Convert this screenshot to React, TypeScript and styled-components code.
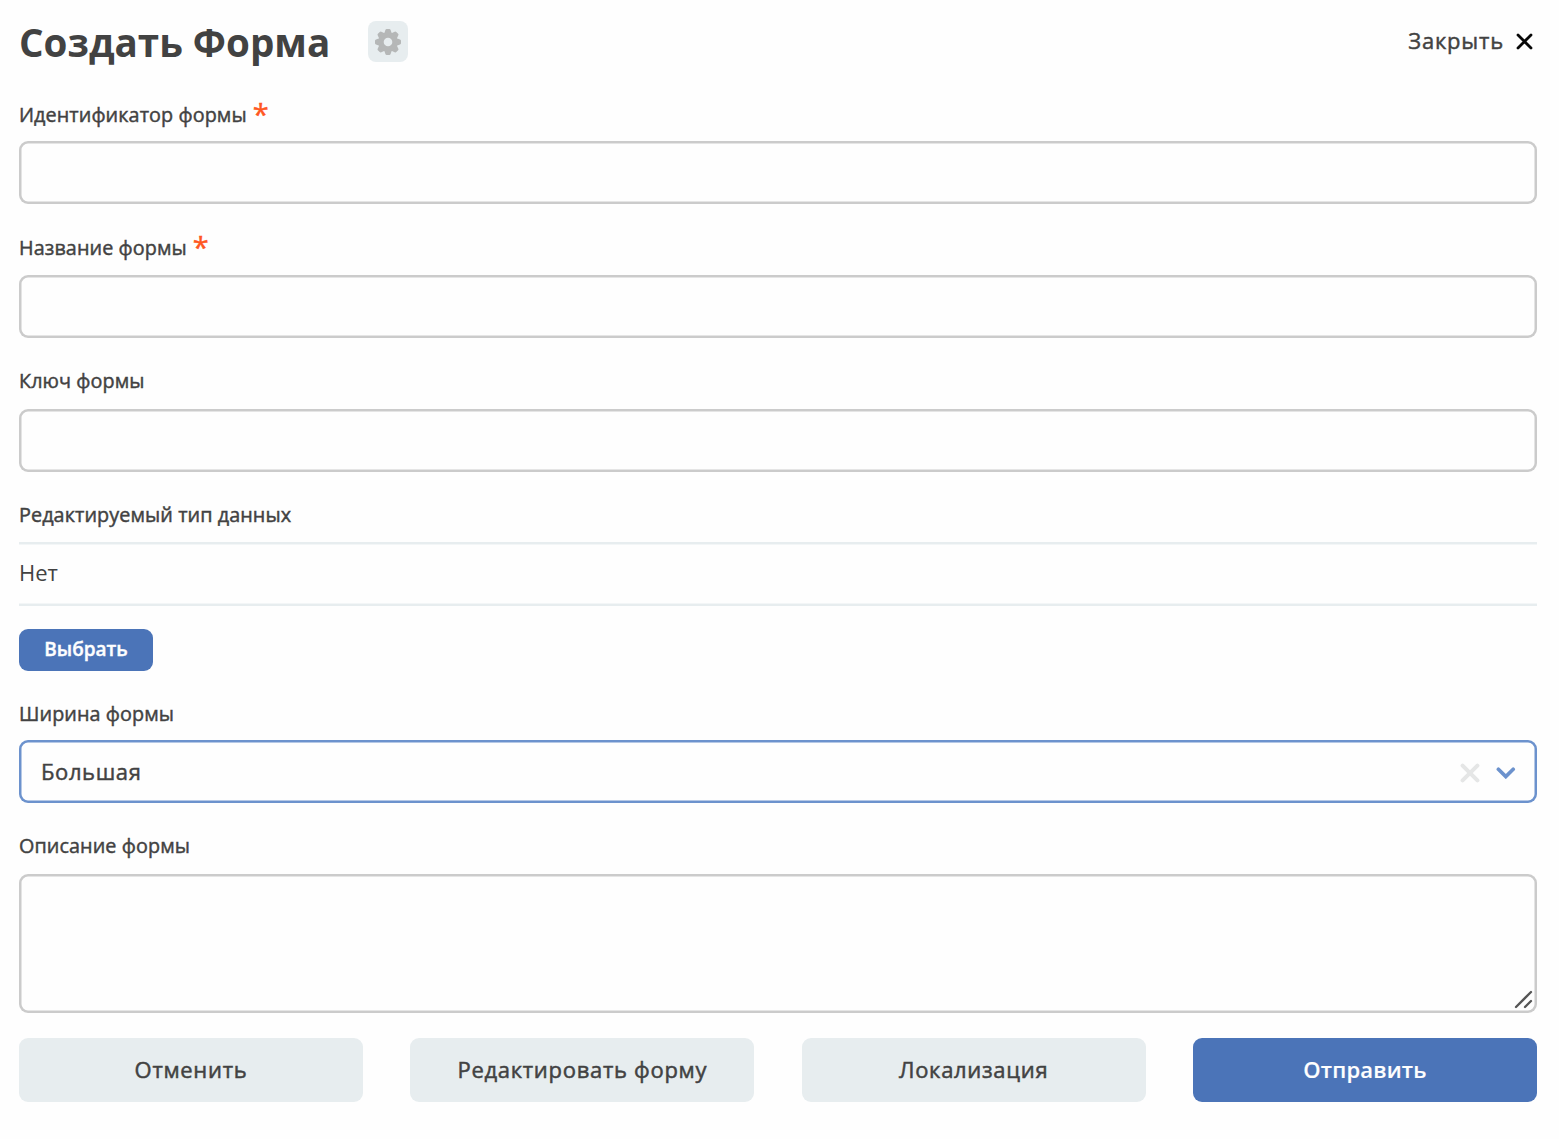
import React from 'react';
import styled, { createGlobalStyle } from 'styled-components';

const GlobalStyle = createGlobalStyle`
  * { box-sizing: border-box; }
  body { margin: 0; background: #fefefe; }
`;

const Page = styled.main`
  width: 1559px;
  height: 1139px;
  padding: 0 22px 0 19px;
  display: flex;
  flex-direction: column;
  background: #fefefe;
  color: #424242;
  font-family: 'Open Sans', 'Noto Sans', sans-serif;
  font-weight: 400;
`;

const Header = styled.header`
  height: 88px;
  flex: none;
  display: flex;
  align-items: flex-start;
`;

const Title = styled.h1`
  margin: 0;
  padding-top: 16px;
  width: 349px;
  font-size: 38.6px;
  line-height: 52px;
  font-weight: 700;
  white-space: nowrap;
`;

const SettingsButton = styled.button`
  margin: 21px 0 0;
  padding: 0;
  width: 40px;
  height: 41px;
  border: 0;
  border-radius: 8px;
  background: #e7edef;
  display: flex;
  align-items: center;
  justify-content: center;
`;

const CloseButton = styled.button`
  margin: 23px 4px 0 auto;
  padding: 0;
  border: 0;
  background: none;
  display: flex;
  align-items: center;
  gap: 12px;
  color: inherit;
  font: 400 22px/34px 'Open Sans', sans-serif;
  -webkit-text-stroke: 0.45px currentColor;
  letter-spacing: 0.8px;

  svg {
    margin-top: 2px;
  }
`;

const Field = styled.section<{ $gap: number }>`
  display: flex;
  flex-direction: column;
  align-items: flex-start;
  flex: none;
  margin-bottom: ${(p) => p.$gap}px;
`;

const Label = styled.label<{ $height?: number }>`
  display: flex;
  height: ${(p) => p.$height ?? 53}px;
  font-size: 19.8px;
  line-height: 53px;
  letter-spacing: 0.08px;
  -webkit-text-stroke: 0.45px currentColor;
  white-space: nowrap;
`;

const Required = styled.span`
  margin-left: 6px;
  color: #ff5722;
  font-size: 29px;
  line-height: 51px;
`;

const Input = styled.input`
  width: 100%;
  height: 63px;
  border: 0;
  border-radius: 9px;
  outline: 0;
  padding: 0 22px;
  background: #fefefe;
  box-shadow: inset 0 0 0 2.5px #cbcbcb;
`;

const TextAreaFrame = styled.div`
  width: 100%;
  height: 139px;
  border-radius: 9px;
  padding: 0 4px 4px 0;
  box-shadow: inset 0 0 0 2.5px #cbcbcb;
  display: flex;
  align-items: flex-end;
`;

const TextArea = styled.textarea`
  flex: 1;
  height: 130px;
  border: 0;
  outline: 0;
  resize: none;
  margin-left: 10px;
  background: transparent;
`;

const Value = styled.div`
  width: 100%;
  height: 63.5px;
  box-shadow: inset 0 2.6px #e7edef, inset 0 -2.6px #e7edef;
  font-size: 22px;
  line-height: 60px;
`;

const PickButton = styled.button`
  margin: 23.5px 0 0;
  padding: 0 0 1px;
  width: 134px;
  height: 41.5px;
  border: 0;
  border-radius: 9px;
  background: #4b74b8;
  color: #fefefe;
  font: 600 19px/39px 'Open Sans', sans-serif;
  -webkit-text-stroke: 0.4px currentColor;
`;

const Select = styled.div`
  width: 100%;
  height: 63px;
  border-radius: 9px;
  padding: 0 21px 0 22px;
  box-shadow: inset 0 0 0 2.5px #6c92cd;
  display: flex;
  align-items: center;
`;

const SelectText = styled.span`
  flex: 1;
  padding-bottom: 2px;
  font-size: 22px;
  line-height: 60px;
  letter-spacing: 0.6px;
  -webkit-text-stroke: 0.45px currentColor;
`;

const SelectIcons = styled.div`
  display: flex;
  align-items: center;
  gap: 16px;
  padding-top: 3px;
`;

const Actions = styled.footer`
  display: grid;
  grid-template-columns: repeat(4, 1fr);
  column-gap: 47.4px;
`;

const ActionButton = styled.button<{ $primary?: boolean }>`
  height: 64px;
  padding: 0 0 2px;
  border: 0;
  border-radius: 9px;
  background: ${(p) => (p.$primary ? '#4b74b8' : '#e7edef')};
  color: ${(p) => (p.$primary ? '#fefefe' : '#424242')};
  font: ${(p) => (p.$primary ? 600 : 400)} 22px/34px 'Open Sans', sans-serif;
  letter-spacing: ${(p) => (p.$primary ? 0.2 : 0.7)}px;
  -webkit-text-stroke: ${(p) => (p.$primary ? 0.15 : 0.5)}px currentColor;
`;

const GearIcon = () => (
  <svg width="26" height="26" viewBox="0 0 26 26">
    <g fill="#b5b7b7">
      {[0, 45, 90, 135, 180, 225, 270, 315].map((angle) => (
        <path
          key={angle}
          d="M9 5 10.4 1Q10.7 0 11.7 0H14.3Q15.3 0 15.6 1L17 5Z"
          transform={`rotate(${angle} 13 13)`}
        />
      ))}
      <circle cx="13" cy="13" r="9.7" />
    </g>
    <circle cx="13" cy="13" r="4.3" fill="#e7edef" />
  </svg>
);

const CloseIcon = () => (
  <svg width="17" height="17" viewBox="0 0 17 17" fill="none" stroke="#080808" strokeWidth="2.8" strokeLinecap="round">
    <path d="M2 2l13 13M15 2L2 15" />
  </svg>
);

const ClearIcon = () => (
  <svg width="20" height="20" viewBox="0 0 20 20" fill="none" stroke="#e5e6e6" strokeWidth="4" strokeLinecap="round">
    <path d="M2.6 2.6l14.8 14.8M17.4 2.6L2.6 17.4" />
  </svg>
);

const ChevronIcon = () => (
  <svg width="20" height="12" viewBox="0 0 20 12" fill="none" stroke="#6c92cd" strokeWidth="3.7" strokeLinecap="round">
    <path d="M2.4 2.3l7.4 7.3 7.4-7.3" />
  </svg>
);

const ResizeIcon = () => (
  <svg width="19" height="19" viewBox="0 0 19 19" fill="none" stroke="#555" strokeWidth="2.3" strokeLinecap="round">
    <path d="M2 17L17 2M11 17l6-6" />
  </svg>
);

export default function App() {
  return (
    <>
      <GlobalStyle />
      <Page>
        <Header>
          <Title>Создать Форма</Title>
          <SettingsButton>
            <GearIcon />
          </SettingsButton>
          <CloseButton>
            Закрыть
            <CloseIcon />
          </CloseButton>
        </Header>
        <Field $gap={17}>
          <Label>
            Идентификатор формы<Required>*</Required>
          </Label>
          <Input />
        </Field>
        <Field $gap={16}>
          <Label $height={54}>
            Название формы<Required>*</Required>
          </Label>
          <Input />
        </Field>
        <Field $gap={16}>
          <Label $height={55}>Ключ формы</Label>
          <Input />
        </Field>
        <Field $gap={16}>
          <Label $height={54}>Редактируемый тип данных</Label>
          <Value>Нет</Value>
          <PickButton>Выбрать</PickButton>
        </Field>
        <Field $gap={16}>
          <Label $height={53.5}>Ширина формы</Label>
          <Select>
            <SelectText>Большая</SelectText>
            <SelectIcons>
              <ClearIcon />
              <ChevronIcon />
            </SelectIcons>
          </Select>
        </Field>
        <Field $gap={25}>
          <Label $height={55}>Описание формы</Label>
          <TextAreaFrame>
            <TextArea />
            <ResizeIcon />
          </TextAreaFrame>
        </Field>
        <Actions>
          <ActionButton>Отменить</ActionButton>
          <ActionButton>Редактировать форму</ActionButton>
          <ActionButton>Локализация</ActionButton>
          <ActionButton $primary>Отправить</ActionButton>
        </Actions>
      </Page>
    </>
  );
}
